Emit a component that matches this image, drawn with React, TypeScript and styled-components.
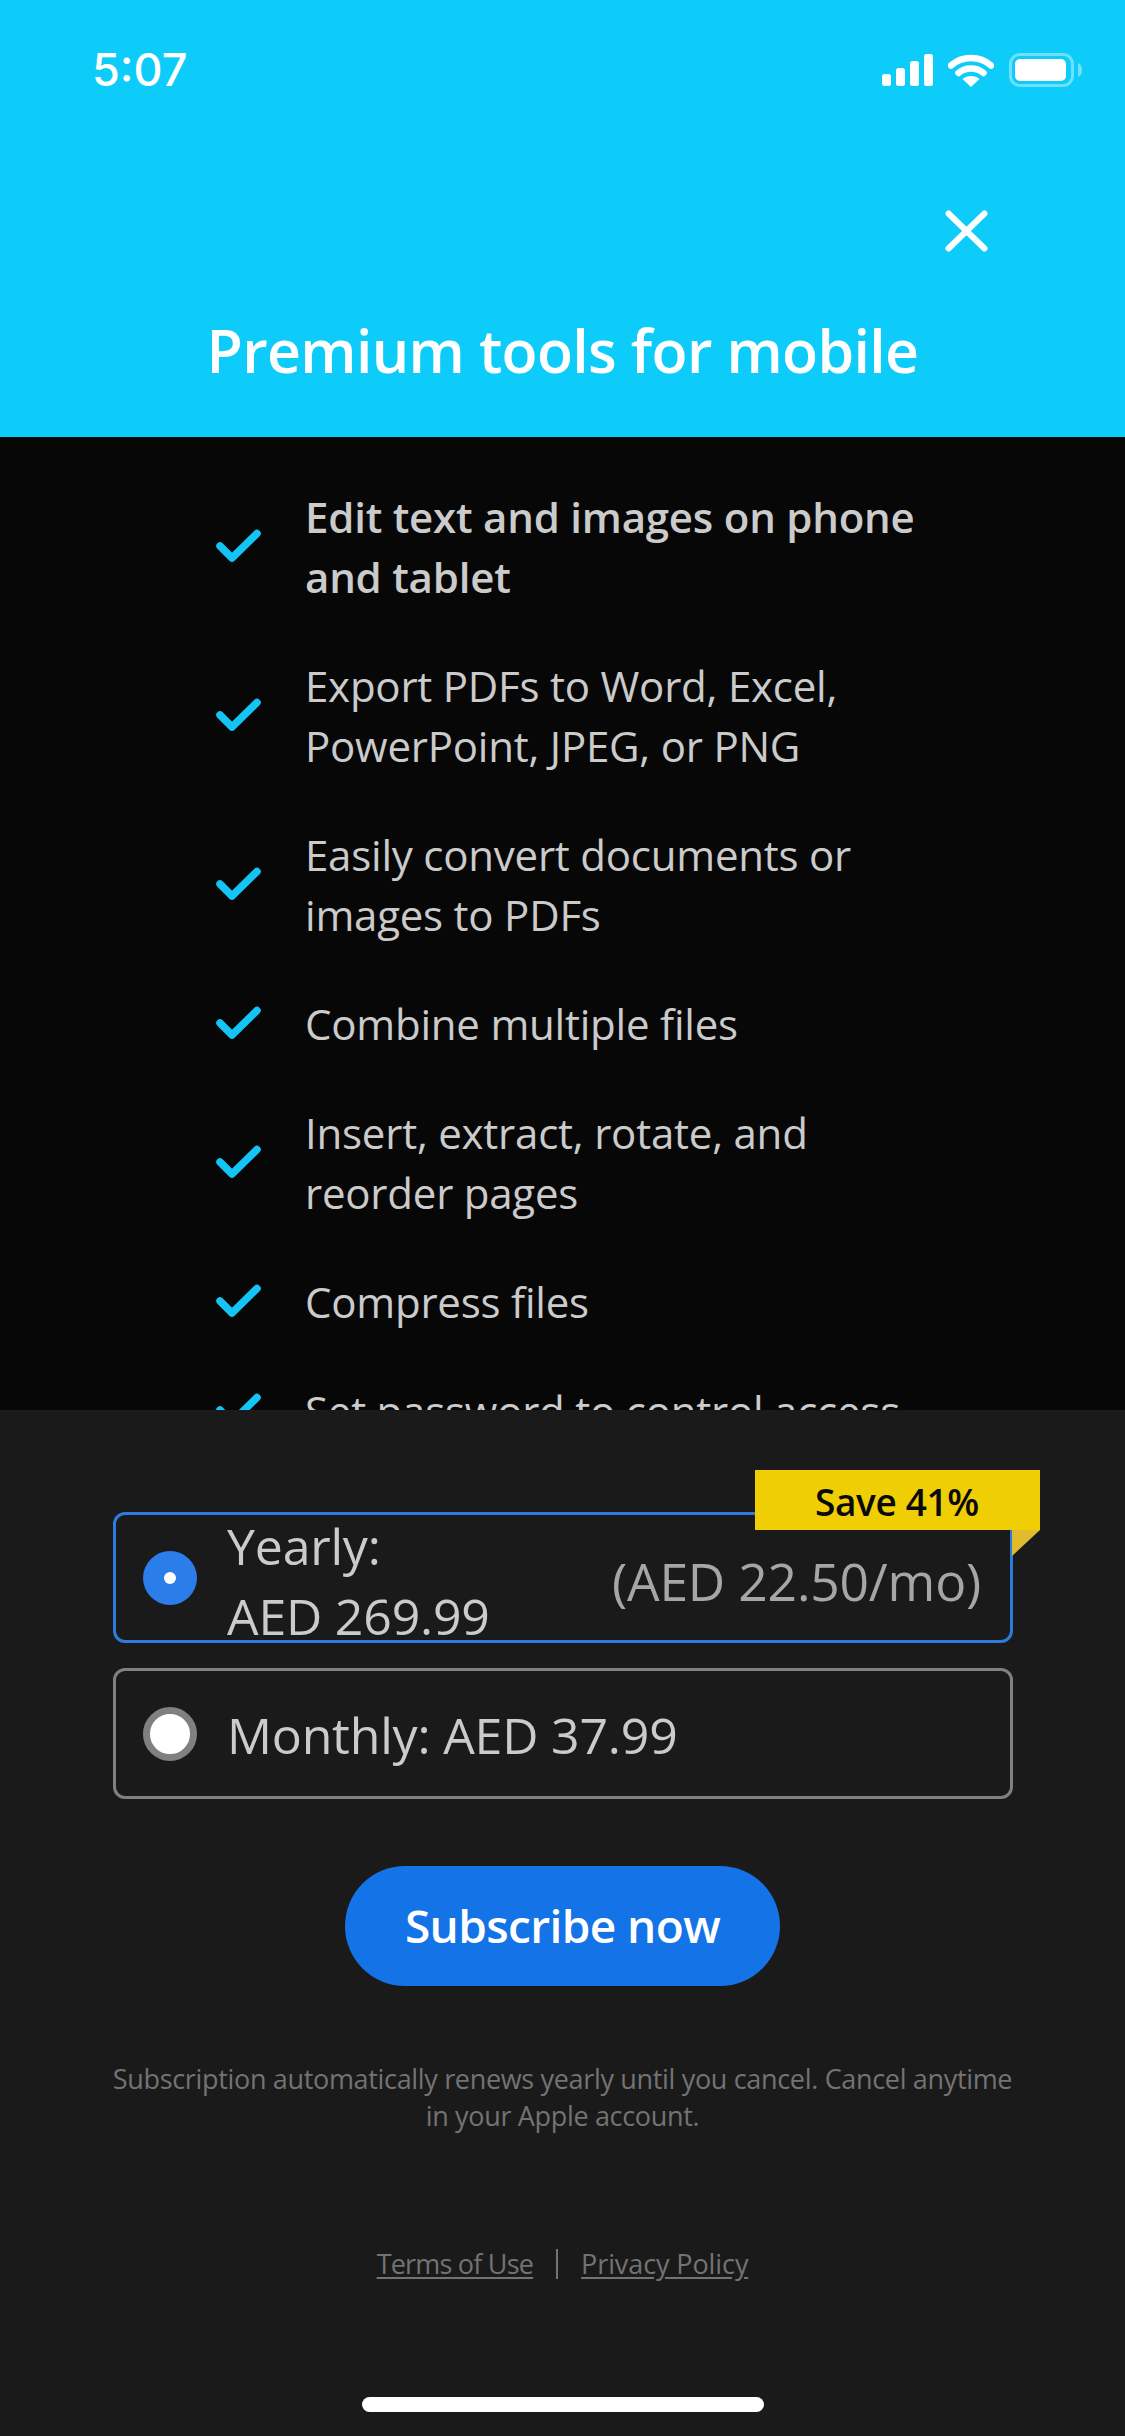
import React from "react";
import styled, { createGlobalStyle } from "styled-components";

const Global = createGlobalStyle`
  html, body { margin: 0; padding: 0; background: #1a1a1a; }
  * { box-sizing: border-box; }
`;

const FONT = `"Open Sans", "Noto Sans", "Liberation Sans", sans-serif`;

const Screen = styled.div`
  width: 1125px;
  height: 2436px;
  display: flex;
  flex-direction: column;
  overflow: hidden;
  font-family: ${FONT};
  background: #070707;
`;

const Header = styled.header`
  height: 437px;
  flex: none;
  background: #0eccf9;
  color: #fff;
  display: flex;
  flex-direction: column;
`;

const StatusBar = styled.div`
  display: flex;
  align-items: center;
  justify-content: space-between;
  padding: 44px 43px 0 92px;
  height: 96px;
`;

const Time = styled.span`
  font-family: Inter, sans-serif;
  font-size: 45px;
  font-weight: 500;
  line-height: 52px;
`;

const StatusIcons = styled.div`
  display: flex;
  align-items: center;
  gap: 15px;
`;

const CloseRow = styled.div`
  display: flex;
  justify-content: flex-end;
  padding: 114px 137px 0 0;
`;

const CloseButton = styled.button`
  width: 43px;
  height: 42px;
  padding: 0;
  border: 0;
  background: none;
  display: block;
`;

const Title = styled.h1`
  margin: 60px 0 0;
  font-size: 59px;
  line-height: 76px;
  font-weight: 600;
  letter-spacing: -0.65px;
  text-align: center;
`;

const FeatureList = styled.ul`
  flex: 1;
  min-height: 0;
  overflow: hidden;
  margin: 0;
  padding: 50px 0 0 216px;
  list-style: none;
  display: flex;
  flex-direction: column;
  gap: 49px;
`;

const Feature = styled.li`
  flex: none;
  display: flex;
  align-items: center;
  gap: 44px;
`;

const CheckIcon = styled.svg`
  width: 45px;
  height: 33px;
  flex: none;
  margin-top: -4px;
`;

const FeatureText = styled.span<{ $bold?: boolean }>`
  font-size: 42px;
  line-height: 60px;
  letter-spacing: -0.22px;
  white-space: nowrap;
  color: #cbcbcb;
  font-weight: ${(p) => (p.$bold ? 600 : 400)};
`;

const Footer = styled.footer`
  height: 1026px;
  flex: none;
  background: #1a1a1a;
  padding: 102px 113px 24px;
  display: flex;
  flex-direction: column;
  align-items: center;
`;

const Options = styled.div`
  width: 900px;
  align-self: flex-start;
  display: flex;
  flex-direction: column;
  gap: 25px;
`;

const Option = styled.div<{ $selected?: boolean }>`
  position: relative;
  height: 131px;
  border: 3px solid ${(p) => (p.$selected ? "#2f7bdc" : "#808080")};
  border-radius: 12px;
  display: flex;
  align-items: center;
  padding: 0 29px 0 27px;
  gap: 30px;
  color: #cbcbcb;
  font-size: 50px;
  letter-spacing: -0.2px;
`;

const Radio = styled.span<{ $selected?: boolean }>`
  width: 54px;
  height: 54px;
  flex: none;
  border-radius: 50%;
  display: flex;
  align-items: center;
  justify-content: center;
  background: ${(p) => (p.$selected ? "#2b7de9" : "#fff")};
  border: ${(p) => (p.$selected ? "0" : "7px solid #808080")};
`;

const RadioDot = styled.span`
  width: 12px;
  height: 12px;
  border-radius: 50%;
  background: #fff;
`;

const PlanLines = styled.div`
  line-height: 70px;
  white-space: nowrap;
  margin-top: 7px;
`;

const PlanSingle = styled.div`
  white-space: nowrap;
  line-height: 70px;
  margin-top: 3px;
`;

const PerMonth = styled.div`
  margin-left: auto;
  white-space: nowrap;
  color: #a6a6a6;
  font-size: 51.6px;
  line-height: 70px;
  margin-top: 6px;
`;

const Badge = styled.div`
  position: absolute;
  top: -45px;
  right: -30px;
  width: 285px;
  height: 60px;
  background: #efcf04;
  color: #0a0a0a;
  font-size: 37px;
  font-weight: 600;
  letter-spacing: -0.35px;
  line-height: 64px;
  padding-left: 60px;
  white-space: nowrap;
`;

const BadgeFold = styled.span`
  position: absolute;
  left: 257px;
  top: 60px;
  width: 0;
  height: 0;
  border-top: 26px solid #e0bb2e;
  border-right: 28px solid transparent;
`;

const Subscribe = styled.button`
  margin-top: 67px;
  width: 435px;
  height: 120px;
  flex: none;
  border: 0;
  border-radius: 60px;
  background: #1473e6;
  color: #fff;
  font-family: ${FONT};
  font-size: 46px;
  font-weight: 600;
  letter-spacing: -0.6px;
  padding: 0 0 3px;
`;

const FinePrint = styled.p`
  margin: 74px -10px 0;
  font-size: 27px;
  line-height: 37px;
  letter-spacing: -0.33px;
  color: #737373;
  text-align: center;
  white-space: nowrap;
`;

const Links = styled.div`
  margin-top: 111px;
  display: flex;
  align-items: center;
  color: #737373;
  font-size: 27px;
  line-height: 37px;
`;

const LegalLink = styled.a<{ $spacing: number }>`
  color: inherit;
  letter-spacing: ${(p) => p.$spacing}px;
  text-decoration: underline;
  text-underline-offset: 3px;
`;

const Divider = styled.span`
  width: 2px;
  height: 30px;
  margin: 0 23px;
  background: #737373;
`;

const HomeIndicator = styled.div`
  margin-top: auto;
  width: 402px;
  height: 15px;
  flex: none;
  border-radius: 8px;
  background: #fff;
`;

const Check = () => (
  <CheckIcon viewBox="0 0 45 33" fill="none">
    <path d="M4 17 L16 29 L41 4.5" stroke="#14c4f4" strokeWidth="7.5" strokeLinecap="round" strokeLinejoin="round" />
  </CheckIcon>
);

const features: { lines: string[]; bold?: boolean }[] = [
  { lines: ["Edit text and images on phone", "and tablet"], bold: true },
  { lines: ["Export PDFs to Word, Excel,", "PowerPoint, JPEG, or PNG"] },
  { lines: ["Easily convert documents or", "images to PDFs"] },
  { lines: ["Combine multiple files"] },
  { lines: ["Insert, extract, rotate, and", "reorder pages"] },
  { lines: ["Compress files"] },
  { lines: ["Set password to control access"] },
];

export default function App() {
  return (
    <Screen>
      <Global />
      <Header>
        <StatusBar>
          <Time>5:07</Time>
          <StatusIcons>
            <svg width="51" height="32" viewBox="0 0 51 32" fill="#fff">
              <rect x="0" y="20" width="9" height="12" rx="2.5" />
              <rect x="14" y="14" width="9" height="18" rx="2.5" />
              <rect x="28" y="7" width="9" height="25" rx="2.5" />
              <rect x="42" y="0" width="9" height="32" rx="2.5" />
            </svg>
            <svg width="46" height="33" viewBox="0 0 46 33" fill="none">
              <path d="M3 11.5 C14 1.5 32 1.5 43 11.5" stroke="#fff" strokeWidth="6.5" strokeLinecap="round" />
              <path d="M10.5 19 C17.5 13 28.5 13 35.5 19" stroke="#fff" strokeWidth="6.5" strokeLinecap="round" />
              <path d="M23 33 L14.5 25 C19 21 27 21 31.5 25 Z" fill="#fff" />
            </svg>
            <svg width="73" height="34" viewBox="0 0 73 34" fill="none">
              <rect x="1.5" y="1.5" width="62" height="31" rx="9.5" stroke="#fff" strokeOpacity="0.4" strokeWidth="3" />
              <rect x="6" y="6" width="51" height="22" rx="5" fill="#fff" />
              <path d="M69 10 C72 11 73 14 73 17 C73 20 72 23 69 24 Z" fill="#fff" fillOpacity="0.4" />
            </svg>
          </StatusIcons>
        </StatusBar>
        <CloseRow>
          <CloseButton aria-label="Close">
            <svg width="43" height="42" viewBox="0 0 43 42" fill="none">
              <path d="M3.5 3.5 L39.5 38.5 M39.5 3.5 L3.5 38.5" stroke="#fff" strokeWidth="6" strokeLinecap="round" />
            </svg>
          </CloseButton>
        </CloseRow>
        <Title>Premium tools for mobile</Title>
      </Header>
      <FeatureList>
        {features.map((f) => (
          <Feature key={f.lines[0]}>
            <Check />
            <FeatureText $bold={f.bold}>
              {f.lines.map((l, i) => (
                <React.Fragment key={l}>
                  {i > 0 && <br />}
                  {l}
                </React.Fragment>
              ))}
            </FeatureText>
          </Feature>
        ))}
      </FeatureList>
      <Footer>
        <Options>
          <Option $selected>
            <Radio $selected>
              <RadioDot />
            </Radio>
            <PlanLines>
              Yearly:
              <br />
              AED 269.99
            </PlanLines>
            <PerMonth>(AED 22.50/mo)</PerMonth>
            <Badge>
              Save 41%
              <BadgeFold />
            </Badge>
          </Option>
          <Option>
            <Radio />
            <PlanSingle>Monthly: AED 37.99</PlanSingle>
          </Option>
        </Options>
        <Subscribe>Subscribe now</Subscribe>
        <FinePrint>
          Subscription automatically renews yearly until you cancel. Cancel anytime
          <br />
          in your Apple account.
        </FinePrint>
        <Links>
          <LegalLink $spacing={-0.8}>Terms of Use</LegalLink>
          <Divider />
          <LegalLink $spacing={-0.1}>Privacy Policy</LegalLink>
        </Links>
        <HomeIndicator />
      </Footer>
    </Screen>
  );
}
